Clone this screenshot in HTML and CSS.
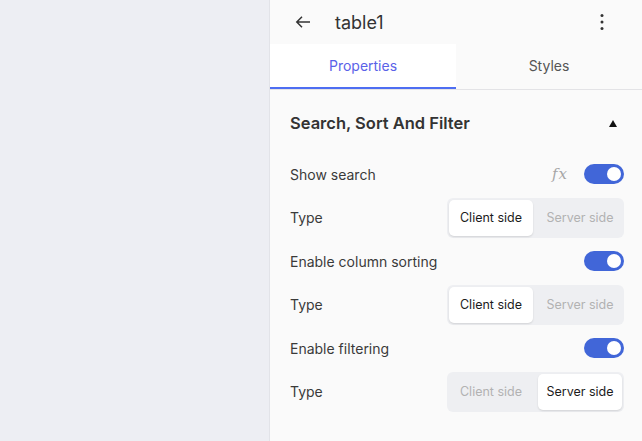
FILE: index.html
```html
<!DOCTYPE html>
<html>
<head>
<meta charset="utf-8">
<link rel="stylesheet" href="styles.css">
</head>
<body>
<div class="app">
  <div class="canvas"></div>
  <aside class="panel">
    <header class="topbar">
      <svg class="back" width="16" height="16" viewBox="0 0 16 16"><path d="M15 8H1.8M7 2.8L1.8 8 7 13.2" fill="none" stroke="#333" stroke-width="1.5"/></svg>
      <span class="title">table1</span>
      <svg class="kebab" width="4" height="18" viewBox="0 0 4 18"><circle cx="2" cy="2.5" r="1.5" fill="#333"/><circle cx="2" cy="9" r="1.5" fill="#333"/><circle cx="2" cy="15.5" r="1.5" fill="#333"/></svg>
    </header>
    <nav class="tabs">
      <div class="tab active">Properties</div>
      <div class="tab">Styles</div>
    </nav>
    <section class="section">
      <div class="section-head">
        <span class="section-title">Search, Sort And Filter</span>
        <span class="caret"></span>
      </div>
      <div class="rows">
        <div class="row">
          <span class="label">Show search</span>
          <div class="controls">
            <span class="fx">fx</span>
            <span class="toggle"><span class="knob"></span></span>
          </div>
        </div>
        <div class="row">
          <span class="label">Type</span>
          <div class="seg"><span class="opt on">Client side</span><span class="opt">Server side</span></div>
        </div>
        <div class="row">
          <span class="label">Enable column sorting</span>
          <span class="toggle"><span class="knob"></span></span>
        </div>
        <div class="row">
          <span class="label">Type</span>
          <div class="seg"><span class="opt on">Client side</span><span class="opt">Server side</span></div>
        </div>
        <div class="row">
          <span class="label">Enable filtering</span>
          <span class="toggle"><span class="knob"></span></span>
        </div>
        <div class="row">
          <span class="label">Type</span>
          <div class="seg"><span class="opt">Client side</span><span class="opt on">Server side</span></div>
        </div>
      </div>
    </section>
  </aside>
</div>
</body>
</html>
```

FILE: styles.css
```css
* { box-sizing: border-box; }
html, body { margin: 0; padding: 0; }
body {
  font-family: Inter, "Noto Sans", sans-serif;
  color: #393939;
  width: 642px;
  height: 441px;
  overflow: hidden;
}
.app {
  display: flex;
  height: 441px;
}
.canvas {
  width: 270px;
  background: #edeef3;
  border-right: 1px solid #e2e3e8;
}
.panel {
  flex: 1;
  background: #fafafa;
  display: flex;
  flex-direction: column;
}
.topbar {
  height: 44px;
  display: flex;
  align-items: center;
  padding: 0 38px 0 25px;
}
.back { display: block; }
.title {
  margin-left: 24px;
  font-size: 18px;
  color: #333;
  flex: 1;
}
.kebab { display: block; }
.tabs {
  display: flex;
  border-bottom: 1px solid #e3e3e6;
}
.tab {
  flex: 1;
  height: 45px;
  display: flex;
  align-items: center;
  justify-content: center;
  font-size: 14px;
  color: #555;
  border-bottom: 2px solid transparent;
}
.tab.active {
  background: #fff;
  color: #5a62e8;
  border-bottom-color: #4e6ef2;
}
.section {
  padding: 21px 18px 0 20px;
}
.section-head {
  height: 24px;
  display: flex;
  align-items: center;
  justify-content: space-between;
}
.section-title {
  font-size: 16.5px;
  font-weight: 600;
  color: #333;
}
.caret {
  width: 0;
  height: 0;
  border-left: 4px solid transparent;
  border-right: 4px solid transparent;
  border-bottom: 7px solid #111;
  margin-right: 7px;
}
.rows {
  margin-top: 19px;
  display: flex;
  flex-direction: column;
  gap: 3.5px;
}
.row {
  height: 40px;
  display: flex;
  align-items: center;
  justify-content: space-between;
}
.label {
  font-size: 14px;
  color: #3a3a3a;
}
.controls {
  display: flex;
  align-items: center;
  gap: 16px;
}
.fx {
  font-family: "DejaVu Serif", serif;
  font-style: italic;
  font-size: 15px;
  letter-spacing: 1px;
  color: #a6a6a6;
}
.toggle {
  width: 40px;
  height: 20px;
  border-radius: 10px;
  background: #4166d8;
  display: flex;
  align-items: center;
  justify-content: flex-end;
  padding-right: 3px;
}
.knob {
  width: 14px;
  height: 14px;
  border-radius: 50%;
  background: #fff;
}
.seg {
  width: 177px;
  height: 40px;
  background: #eeeff2;
  border-radius: 6px;
  padding: 2px;
  gap: 5px;
  display: flex;
}
.opt {
  flex: 1;
  display: flex;
  align-items: center;
  justify-content: center;
  font-size: 12.5px;
  color: #b2b2b2;
  border-radius: 5px;
}
.opt.on {
  background: #fff;
  color: #1c1c1c;
  box-shadow: 0 1px 2px rgba(0,0,0,0.12);
}
```
